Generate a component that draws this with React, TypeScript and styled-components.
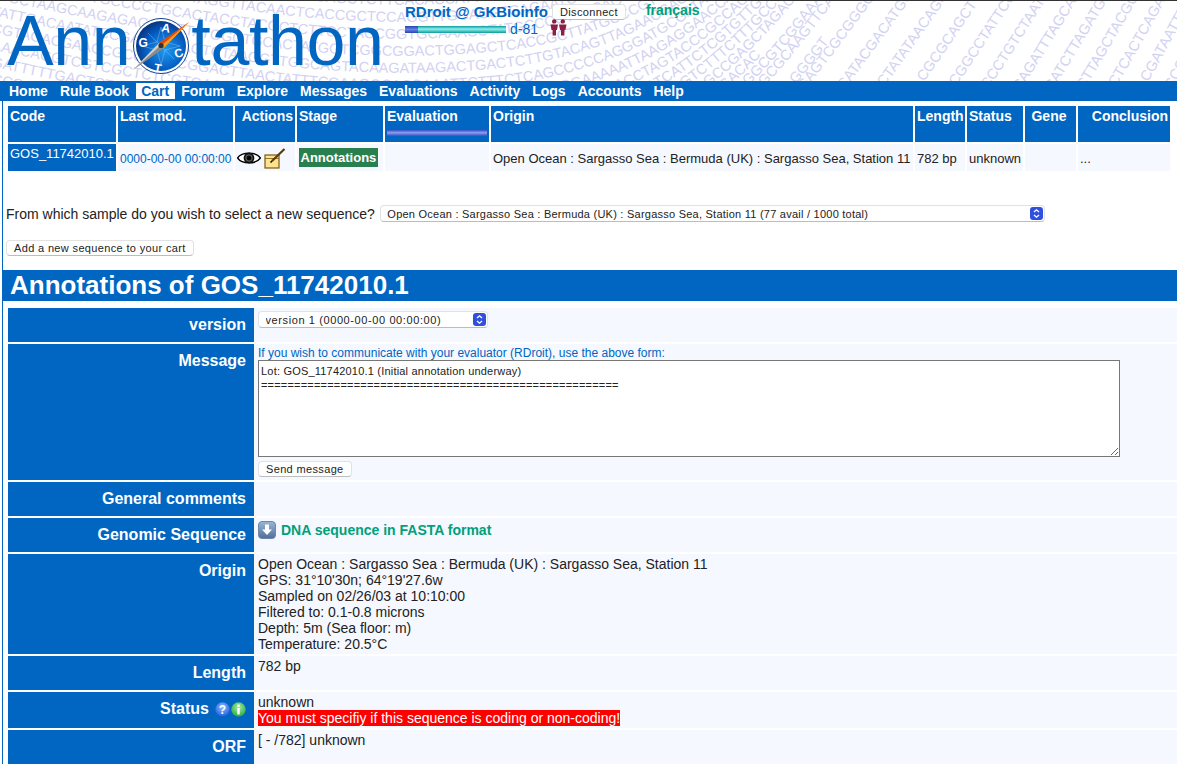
import React from 'react'
import styled, { createGlobalStyle } from 'styled-components'

const BLUE = '#0066c2'
const SANS = '"Liberation Sans", Arial, sans-serif'

const GlobalStyle = createGlobalStyle`
  html, body {
    margin: 0;
    height: 764px;
    overflow: hidden;
    background: #fff;
    font-family: ${SANS};
    font-size: 14px;
    color: #222;
  }
`

const Header = styled.header`
  position: relative;
  height: 80px;
  border-top: 1px solid #333;
  overflow: hidden;
  display: flex;
`

const Backdrop = styled.svg`
  position: absolute;
  inset: 0;
  width: 100%;
  height: 100%;
`

const Logo = styled.div`
  position: relative;
  display: flex;
  align-items: center;
  width: 398px;
  padding-left: 7px;
  box-sizing: border-box;
  font-size: 70px;
  line-height: 80px;
  color: ${BLUE};
  letter-spacing: -0.4px;
  svg {
    margin: 9px 1px 0 2px;
    flex: none;
  }
`

const Account = styled.div`
  position: relative;
  padding: 2px 0 0 7px;
  display: flex;
  flex-direction: column;
  gap: 1px;
`

const AccountRow = styled.div`
  display: flex;
  align-items: center;
  height: 17px;
`

const UserName = styled.a`
  font-weight: bold;
  font-size: 15px;
  color: ${BLUE};
  margin-right: 4px;
`

const Lang = styled.a`
  font-weight: bold;
  font-size: 14px;
  color: #00a07a;
  margin: -4px 0 0 20px;
`

const Button = styled.button`
  font-family: ${SANS};
  font-size: 11px;
  letter-spacing: 0.35px;
  color: #222;
  height: 16px;
  padding: 0 7px;
  background: #fff;
  border: 1px solid #e2e2e2;
  border-bottom-color: #bdbdbd;
  border-radius: 4px;
  white-space: nowrap;
`

const Progress = styled.div`
  width: 101px;
  height: 7px;
  background: linear-gradient(#0d9a9a, #8ff0ee 45%, #0d9a9a);
`

const ProgressFill = styled.div`
  width: 13px;
  height: 100%;
  background: linear-gradient(#2a41b0, #6482e4 50%, #2a41b0);
`

const Rank = styled.span`
  color: ${BLUE};
  margin: -1px 0 0 4px;
`

const People = styled.svg`
  margin: -4px 0 0 12px;
`

const Nav = styled.nav`
  background: ${BLUE};
  height: 20px;
  display: flex;
  align-items: center;
  gap: 4px;
  padding-left: 5px;
`

const NavItem = styled.a<{ $active?: boolean }>`
  font-weight: bold;
  font-size: 14px;
  line-height: 16px;
  padding: 0 4px;
  color: ${p => (p.$active ? BLUE : '#fff')};
  background: ${p => (p.$active ? '#fff' : 'transparent')};
  ${p => p.$active && 'padding: 0 6px 0 5px; margin: 0 -2px 0 -1px;'}
`

const Main = styled.main`
  margin-left: 2px;
  border-left: 1px solid ${BLUE};
  padding-top: 5px;
`

const CartGrid = styled.div`
  display: grid;
  grid-template-columns: 108px 115px 60px 86px 104px 422px 50px 56px 51px 92px;
  grid-template-rows: 36px 27px;
  gap: 2px;
  margin-left: 5px;
`

const HeadCell = styled.div<{ $align?: string }>`
  background: ${BLUE};
  color: #fff;
  font-weight: bold;
  font-size: 14px;
  line-height: 16px;
  padding: 2px;
  text-align: ${p => p.$align || 'left'};
  white-space: nowrap;
`

const GeneHead = styled(HeadCell)`
  padding-right: 5px;
`

const EvalBar = styled.div`
  height: 6px;
  margin-top: 6px;
  background: linear-gradient(#3a4cc0, #86a0f2 45%, #3a4cc0);
`

const DataCell = styled.div<{ $code?: boolean }>`
  background: ${p => (p.$code ? BLUE : '#f5f8ff')};
  color: ${p => (p.$code ? '#fff' : '#222')};
  font-size: 13px;
  line-height: 16px;
  padding: ${p => (p.$code ? '2px' : '7px 2px 0')};
  white-space: nowrap;
`

const DateLink = styled.a`
  font-size: 12px;
  color: ${BLUE};
`

const ActionCell = styled(DataCell)`
  padding: 1px 0 0 2px;
  display: flex;
  align-items: center;
  gap: 3px;
`

const StageCell = styled(DataCell)`
  padding: 4px 2px 0;
`

const StageBadge = styled.span`
  display: inline-block;
  background: #2a7f4f;
  color: #fff;
  font-weight: bold;
  font-size: 13px;
  line-height: 19px;
  padding: 0 1.5px;
`

const Picker = styled.div`
  display: flex;
  align-items: center;
  margin: 34px 0 0 3px;
  height: 17px;
  gap: 5px;
`

const SelectWrap = styled.span<{ $width: number }>`
  position: relative;
  display: block;
  width: ${p => p.$width}px;
  height: 17px;
  svg {
    position: absolute;
    right: 2px;
    top: 2px;
    pointer-events: none;
  }
`

const Select = styled.select<{ $spacing: number }>`
  appearance: none;
  width: 100%;
  height: 100%;
  display: block;
  font-family: ${SANS};
  font-size: 11px;
  letter-spacing: ${p => p.$spacing}px;
  color: #222;
  padding: 0 20px 0 6.5px;
  background: #fff;
  border: 1px solid #e2e2e2;
  border-bottom-color: #bdbdbd;
  border-radius: 4px;
`

const AddRow = styled.div`
  display: flex;
  margin: 18px 0 0 3px;
`

const SectionBar = styled.h1`
  margin: 14px 0 0;
  background: ${BLUE};
  color: #fff;
  height: 31px;
  line-height: 31px;
  font-size: 26px;
  font-weight: bold;
  padding-left: 7px;
`

const Details = styled.div`
  margin: 7px 0 0 5px;
  display: flex;
  flex-direction: column;
  gap: 2px;
`

const Row = styled.div<{ $height: number }>`
  display: grid;
  grid-template-columns: 246px 1fr;
  min-height: ${p => p.$height}px;
`

const Label = styled.div`
  background: ${BLUE};
  color: #fff;
  font-weight: bold;
  font-size: 16px;
  line-height: 18px;
  text-align: right;
  padding: 8px 8px 0 0;
  svg {
    margin-left: 1px;
    vertical-align: -3px;
  }
  svg:first-of-type {
    margin-left: 6px;
  }
`

const Value = styled.div`
  background: #f5f8ff;
  padding: 2px 4px;
  font-size: 14px;
  line-height: 16px;
`

const VersionValue = styled(Value)`
  padding-top: 3px;
`

const MessageValue = styled(Value)`
  display: flex;
  flex-direction: column;
  align-items: flex-start;
`

const Hint = styled.a`
  display: block;
  font-size: 12px;
  line-height: 14px;
  color: ${BLUE};
`

const MessageBox = styled.textarea`
  display: block;
  box-sizing: border-box;
  width: 862px;
  height: 97px;
  margin: 0 0 4px;
  padding: 3px 2px;
  border: 1px solid #777;
  background: #fff;
  font-family: ${SANS};
  font-size: 11px;
  line-height: 14px;
  color: #222;
  letter-spacing: 0.2px;
  outline: none;
`

const FastaValue = styled(Value)`
  display: flex;
  align-items: flex-start;
  padding-top: 3px;
  gap: 5px;
`

const FastaLink = styled.a`
  font-weight: bold;
  color: #00a07a;
  line-height: 18px;
`

const Warning = styled.div`
  display: inline-block;
  background: #f00;
  color: #fff;
`

// deterministic ACGT strings for the header backdrop
const dna = (seed: number, len: number) => {
  let s = ''
  let x = seed * 7919 + 13
  for (let i = 0; i < len; i++) {
    x = (x * 1103515245 + 12345) & 0x7fffffff
    s += 'ACGT'[(x >> 16) & 3]
  }
  return s
}

// text direction in degrees along the header, x -> angle
const ANGLES = [[0, 12], [250, 8], [400, 0], [500, -6], [600, -20], [700, -38], [800, -52], [1200, -62]]

const angleAt = (x: number) => {
  for (let i = 1; i < ANGLES.length; i++) {
    const [x0, a0] = ANGLES[i - 1]
    const [x1, a1] = ANGLES[i]
    if (x <= x1) return a0 + ((a1 - a0) * (x - x0)) / (x1 - x0)
  }
  return -62
}

const STEP = 8
const CURVE: number[] = []
for (let x = -20, y = 0; x <= 1200; x += STEP) {
  CURVE.push(y)
  y += Math.tan((angleAt(x) * Math.PI) / 180) * STEP
}

// lines thin out to the right, where the type fans open
const dnaLines = () => {
  const lines: { id: string; d: string; text: string }[] = []
  for (let k = 0; k < 70; k++) {
    const y0 = -90 + k * 17
    const limit = k % 3 === 0 ? 1200 : k % 3 === 1 ? 770 : 830
    let first = -1
    let last = -1
    CURVE.forEach((dy, i) => {
      const x = -20 + i * STEP
      const y = y0 + dy
      if (x > limit || y < -14 || y > 92) return
      if (first < 0) first = i
      last = i
    })
    if (last - first < 2) continue
    const pts: string[] = []
    let length = 0
    for (let i = first; i <= last; i++) {
      const x = -20 + i * STEP
      pts.push(`${x} ${(y0 + CURVE[i]).toFixed(1)}`)
      length += STEP / Math.cos((angleAt(x) * Math.PI) / 180)
    }
    lines.push({ id: `dna${k}`, d: `M ${pts.join(' L ')}`, text: dna(k + 1, Math.floor(length / 10)) })
  }
  return lines
}

const DNA_LINES = dnaLines()

const DnaBackdrop = () => (
  <Backdrop aria-hidden="true">
    <defs>
      {DNA_LINES.map(l => (
        <path key={l.id} id={l.id} d={l.d} />
      ))}
    </defs>
    {DNA_LINES.map(l => (
      <text key={l.id} fontFamily={SANS} fontSize="14.5" fill="#d2d2f2">
        <textPath href={`#${l.id}`}>{l.text}</textPath>
      </text>
    ))}
  </Backdrop>
)

const Compass = () => (
  <svg width="58" height="58" viewBox="0 0 58 58">
    <defs>
      <radialGradient id="dial" cx="58%" cy="58%" r="62%">
        <stop offset="0" stopColor="#1f9bf0" />
        <stop offset="0.6" stopColor="#0660c4" />
        <stop offset="1" stopColor="#06307f" />
      </radialGradient>
    </defs>
    <circle cx="29" cy="29" r="27.5" fill="#fff" stroke="#123f8f" strokeWidth="1" />
    <circle cx="29" cy="29" r="25" fill="url(#dial)" />
    <g stroke="#9fc8f0" strokeWidth="0.5" fill="none" opacity="0.8">
      <path d="M29 10 L33 25 L48 29 L33 33 L29 48 L25 33 L10 29 L25 25 Z" />
      <path d="M16 16 L42 42 M42 16 L16 42" />
    </g>
    <g fill="#fff" fontFamily={SANS} fontWeight="bold" fontSize="12" textAnchor="middle">
      <text x="33" y="15" transform="rotate(10 33 15)">A</text>
      <text x="48" y="40" transform="rotate(-20 48 40)">C</text>
      <text x="25" y="55" transform="rotate(10 25 55)">T</text>
      <text x="11" y="30">G</text>
    </g>
    <path d="M57 5 L32 31 L27 26 Z" fill="#e8480e" />
    <path d="M57 5 L32 31 L30 28 Z" fill="#f0a020" />
    <path d="M1 53 L27 26 L32 31 Z" fill="#8a8a8a" />
    <path d="M1 53 L27 26 L29 28 Z" fill="#d0d0d0" />
    <circle cx="29" cy="28.5" r="2.6" fill="#333" />
  </svg>
)

const Stepper = () => (
  <svg width="13" height="13" viewBox="0 0 13 13">
    <rect width="13" height="13" rx="3" fill="#2f4fdc" />
    <path d="M4 5 L6.5 2.8 L9 5 M4 8 L6.5 10.2 L9 8" fill="none" stroke="#fff" strokeWidth="1.3" />
  </svg>
)

const PeopleIcon = () => (
  <People width="17" height="17" viewBox="0 0 17 17" fill="#8c1f45">
    <circle cx="4.2" cy="2.4" r="2.2" />
    <circle cx="12.8" cy="2.4" r="2.2" />
    <path d="M0.5 5.5 H8 L7 11 H6 V16.5 H2.6 V11 H1.5 Z" />
    <path d="M9 5.5 H16.5 L15.5 11 H14.4 V16.5 H11 V11 H10 Z" />
  </People>
)

const EyeIcon = () => (
  <svg width="24" height="14" viewBox="0 0 24 14">
    <path d="M0.5 7 C5 0.5 19 0.5 23.5 7 C19 13.5 5 13.5 0.5 7 Z" fill="#fff" stroke="#000" strokeWidth="1.4" />
    <circle cx="12" cy="7" r="5.4" fill="#111" />
    <circle cx="12" cy="7" r="3.2" fill="none" stroke="#888" strokeWidth="0.8" />
    <circle cx="12" cy="7" r="1.7" fill="#000" />
  </svg>
)

const NoteIcon = () => (
  <svg width="22" height="21" viewBox="0 0 22 21">
    <rect x="1" y="7" width="14" height="13" fill="#ffe48f" stroke="#7a5a10" strokeWidth="1.2" />
    <path d="M1 10.5 H15" stroke="#7a5a10" strokeWidth="0.8" />
    <path d="M8 13 L20.5 1" stroke="#5c3a10" strokeWidth="2.2" />
    <path d="M8 13 L6.5 14.5" stroke="#111" strokeWidth="1.6" />
  </svg>
)

const DownloadIcon = () => (
  <svg width="18" height="18" viewBox="0 0 18 18">
    <defs>
      <linearGradient id="dl" x1="0" y1="0" x2="0" y2="1">
        <stop offset="0" stopColor="#9db6d6" />
        <stop offset="1" stopColor="#4e6f9a" />
      </linearGradient>
    </defs>
    <rect x="0.5" y="0.5" width="17" height="17" rx="3.5" fill="url(#dl)" stroke="#6d87a8" />
    <path d="M7 3.5 H11 V8.5 H14 L9 14 L4 8.5 H7 Z" fill="#fff" />
  </svg>
)

const HelpIcon = () => (
  <svg width="15" height="15" viewBox="0 0 15 15">
    <defs>
      <radialGradient id="hq" cx="50%" cy="35%" r="65%">
        <stop offset="0" stopColor="#8fc0ff" />
        <stop offset="1" stopColor="#1f5cdc" />
      </radialGradient>
    </defs>
    <circle cx="7.5" cy="7.5" r="7.2" fill="url(#hq)" />
    <text x="7.5" y="12" textAnchor="middle" fontFamily={SANS} fontWeight="bold" fontSize="12" fill="#fff">?</text>
  </svg>
)

const InfoIcon = () => (
  <svg width="15" height="15" viewBox="0 0 15 15">
    <defs>
      <radialGradient id="hi" cx="50%" cy="35%" r="65%">
        <stop offset="0" stopColor="#a8f0a0" />
        <stop offset="1" stopColor="#2aa848" />
      </radialGradient>
    </defs>
    <circle cx="7.5" cy="7.5" r="7.2" fill="url(#hi)" />
    <rect x="6.3" y="2.6" width="2.4" height="2.2" fill="#fff" />
    <rect x="6.3" y="6" width="2.4" height="6.4" fill="#fff" />
  </svg>
)

const NAV_ITEMS = ['Home', 'Rule Book', 'Cart', 'Forum', 'Explore', 'Messages', 'Evaluations', 'Activity', 'Logs', 'Accounts', 'Help']

const ORIGIN = 'Open Ocean : Sargasso Sea : Bermuda (UK) : Sargasso Sea, Station 11'

const MESSAGE = `Lot: GOS_11742010.1 (Initial annotation underway)
${'='.repeat(54)}`

export default function App() {
  return (
    <>
      <GlobalStyle />
      <Header>
        <DnaBackdrop />
        <Logo>
          Ann
          <Compass />
          tathon
        </Logo>
        <Account>
          <AccountRow>
            <UserName>RDroit @ GKBioinfo</UserName>
            <Button>Disconnect</Button>
            <Lang>français</Lang>
          </AccountRow>
          <AccountRow>
            <Progress><ProgressFill /></Progress>
            <Rank>d-81</Rank>
            <PeopleIcon />
          </AccountRow>
        </Account>
      </Header>
      <Nav>
        {NAV_ITEMS.map(item => (
          <NavItem key={item} $active={item === 'Cart'}>{item}</NavItem>
        ))}
      </Nav>
      <Main>
        <CartGrid>
          <HeadCell>Code</HeadCell>
          <HeadCell>Last mod.</HeadCell>
          <HeadCell $align="right">Actions</HeadCell>
          <HeadCell>Stage</HeadCell>
          <HeadCell>
            Evaluation
            <EvalBar />
          </HeadCell>
          <HeadCell>Origin</HeadCell>
          <HeadCell>Length</HeadCell>
          <HeadCell>Status</HeadCell>
          <GeneHead $align="center">Gene</GeneHead>
          <HeadCell $align="right">Conclusion</HeadCell>

          <DataCell $code>GOS_11742010.1</DataCell>
          <DataCell><DateLink>0000-00-00 00:00:00</DateLink></DataCell>
          <ActionCell><EyeIcon /><NoteIcon /></ActionCell>
          <StageCell><StageBadge>Annotations</StageBadge></StageCell>
          <DataCell />
          <DataCell>{ORIGIN}</DataCell>
          <DataCell>782 bp</DataCell>
          <DataCell>unknown</DataCell>
          <DataCell />
          <DataCell>...</DataCell>
        </CartGrid>

        <Picker>
          From which sample do you wish to select a new sequence?
          <SelectWrap $width={665}>
            <Select $spacing={0.24} defaultValue="s11">
              <option value="s11">{ORIGIN} (77 avail / 1000 total)</option>
            </Select>
            <Stepper />
          </SelectWrap>
        </Picker>
        <AddRow>
          <Button>Add a new sequence to your cart</Button>
        </AddRow>

        <SectionBar>Annotations of GOS_11742010.1</SectionBar>
        <Details>
          <Row $height={34}>
            <Label>version</Label>
            <VersionValue>
              <SelectWrap $width={230}>
                <Select $spacing={0.6} defaultValue="v1">
                  <option value="v1">version 1 (0000-00-00 00:00:00)</option>
                </Select>
                <Stepper />
              </SelectWrap>
            </VersionValue>
          </Row>
          <Row $height={136}>
            <Label>Message</Label>
            <MessageValue>
              <Hint>If you wish to communicate with your evaluator (RDroit), use the above form:</Hint>
              <MessageBox readOnly defaultValue={MESSAGE} />
              <Button>Send message</Button>
            </MessageValue>
          </Row>
          <Row $height={34}>
            <Label>General comments</Label>
            <Value />
          </Row>
          <Row $height={34}>
            <Label>Genomic Sequence</Label>
            <FastaValue>
              <DownloadIcon />
              <FastaLink>DNA sequence in FASTA format</FastaLink>
            </FastaValue>
          </Row>
          <Row $height={100}>
            <Label>Origin</Label>
            <Value>
              {ORIGIN}<br />
              GPS: 31°10'30n; 64°19'27.6w<br />
              Sampled on 02/26/03 at 10:10:00<br />
              Filtered to: 0.1-0.8 microns<br />
              Depth: 5m (Sea floor: m)<br />
              Temperature: 20.5°C
            </Value>
          </Row>
          <Row $height={34}>
            <Label>Length</Label>
            <Value>782 bp</Value>
          </Row>
          <Row $height={36}>
            <Label>Status<HelpIcon /><InfoIcon /></Label>
            <Value>
              unknown<br />
              <Warning>You must specifiy if this sequence is coding or non-coding!</Warning>
            </Value>
          </Row>
          <Row $height={34}>
            <Label>ORF</Label>
            <Value>[ - /782] unknown</Value>
          </Row>
        </Details>
      </Main>
    </>
  )
}
